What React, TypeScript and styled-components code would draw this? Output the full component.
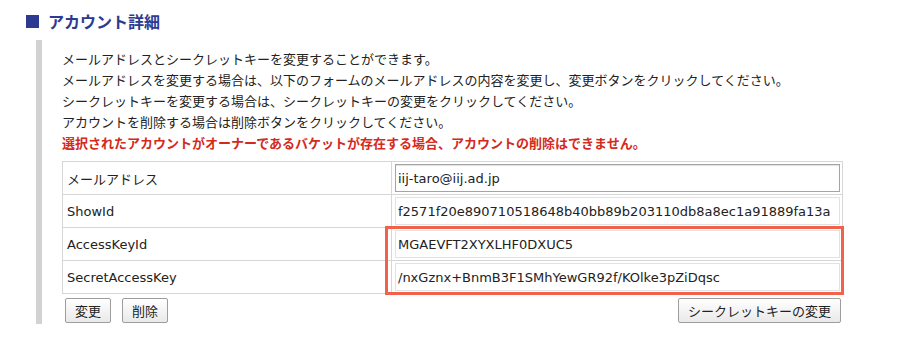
import styled, { createGlobalStyle } from "styled-components";

const GlobalStyle = createGlobalStyle`
  body {
    margin: 0;
    background: #fff;
    color: #222;
    font-family: "DejaVu Sans", "Noto Sans CJK JP", sans-serif;
    font-size: 13px;
  }
`;

const Page = styled.div`
  width: 900px;
  height: 350px;
  overflow: hidden;
`;

const Heading = styled.h2`
  display: flex;
  align-items: center;
  gap: 9px;
  margin: 0;
  padding: 11px 0 0 26px;
  font-family: "Noto Sans CJK JP", sans-serif;
  font-size: 16px;
  line-height: 20px;
  font-weight: 700;
  color: #2d3a92;
`;

const Square = styled.span`
  width: 13px;
  height: 13px;
  background: #2d3a92;
`;

const Section = styled.div`
  margin: 9px 0 0 36px;
  border-left: 6px solid #d2d2d2;
  padding: 8px 57px 1px 20px;
`;

const Notes = styled.div`
  font-family: "Noto Sans CJK JP", sans-serif;
  line-height: 21px;
  color: #222;
`;

const Warning = styled.div`
  color: #d42a1c;
  font-weight: 700;
`;

const TableWrap = styled.div`
  position: relative;
  margin-top: 8px;
`;

const Table = styled.table`
  width: 100%;
  border-collapse: collapse;
`;

const Label = styled.td`
  width: 320px;
  padding: 0 4px;
  border: 1px solid #d6d6d6;
  color: #222;
`;

const ValueCell = styled.td`
  padding: 2px 2px 2px 3px;
  border: 1px solid #d6d6d6;
`;

const Field = styled.input<{ $editable?: boolean }>`
  display: block;
  box-sizing: border-box;
  width: 100%;
  height: 28px;
  margin: 0;
  padding: 0 2px;
  font-family: "DejaVu Sans", "Noto Sans CJK JP", sans-serif;
  font-size: 13px;
  color: #222;
  background: #fff;
  border: 1px solid ${(p) => (p.$editable ? "#a4a4a4" : "#e2e2e2")};
  box-shadow: ${(p) => (p.$editable ? "inset 0 1px 1px rgba(0,0,0,0.12)" : "none")};
  outline: none;
`;

const Highlight = styled.div`
  position: absolute;
  left: 323px;
  top: 65px;
  width: 459px;
  height: 69px;
  box-sizing: border-box;
  border: 3px solid #f26149;
  pointer-events: none;
`;

const Actions = styled.div`
  display: flex;
  justify-content: space-between;
  margin-top: 4px;
  padding: 0 2px 0 3px;
`;

const Group = styled.div`
  display: flex;
  gap: 11px;
`;

const Button = styled.button`
  height: 25px;
  padding: 0 9px;
  font-family: "Noto Sans CJK JP", sans-serif;
  font-size: 13px;
  color: #222;
  background: linear-gradient(#ffffff, #e9e9e9);
  border: 1px solid #9d9d9d;
  border-radius: 2px;
`;

const rows = [
  { label: "メールアドレス", value: "iij-taro@iij.ad.jp", editable: true },
  { label: "ShowId", value: "f2571f20e890710518648b40bb89b203110db8a8ec1a91889fa13a" },
  { label: "AccessKeyId", value: "MGAEVFT2XYXLHF0DXUC5" },
  { label: "SecretAccessKey", value: "/nxGznx+BnmB3F1SMhYewGR92f/KOlke3pZiDqsc" },
];

function App() {
  return (
    <Page>
      <GlobalStyle />
      <Heading>
        <Square />
        アカウント詳細
      </Heading>
      <Section>
        <Notes>
          <div>メールアドレスとシークレットキーを変更することができます。</div>
          <div>メールアドレスを変更する場合は、以下のフォームのメールアドレスの内容を変更し、変更ボタンをクリックしてください。</div>
          <div>シークレットキーを変更する場合は、シークレットキーの変更をクリックしてください。</div>
          <div>アカウントを削除する場合は削除ボタンをクリックしてください。</div>
          <Warning>選択されたアカウントがオーナーであるバケットが存在する場合、アカウントの削除はできません。</Warning>
        </Notes>
        <TableWrap>
          <Table>
            <tbody>
              {rows.map((r) => (
                <tr key={r.label}>
                  <Label>{r.label}</Label>
                  <ValueCell>
                    <Field $editable={r.editable} defaultValue={r.value} readOnly={!r.editable} />
                  </ValueCell>
                </tr>
              ))}
            </tbody>
          </Table>
          <Highlight />
        </TableWrap>
        <Actions>
          <Group>
            <Button>変更</Button>
            <Button>削除</Button>
          </Group>
          <Button>シークレットキーの変更</Button>
        </Actions>
      </Section>
    </Page>
  );
}

export default App;
